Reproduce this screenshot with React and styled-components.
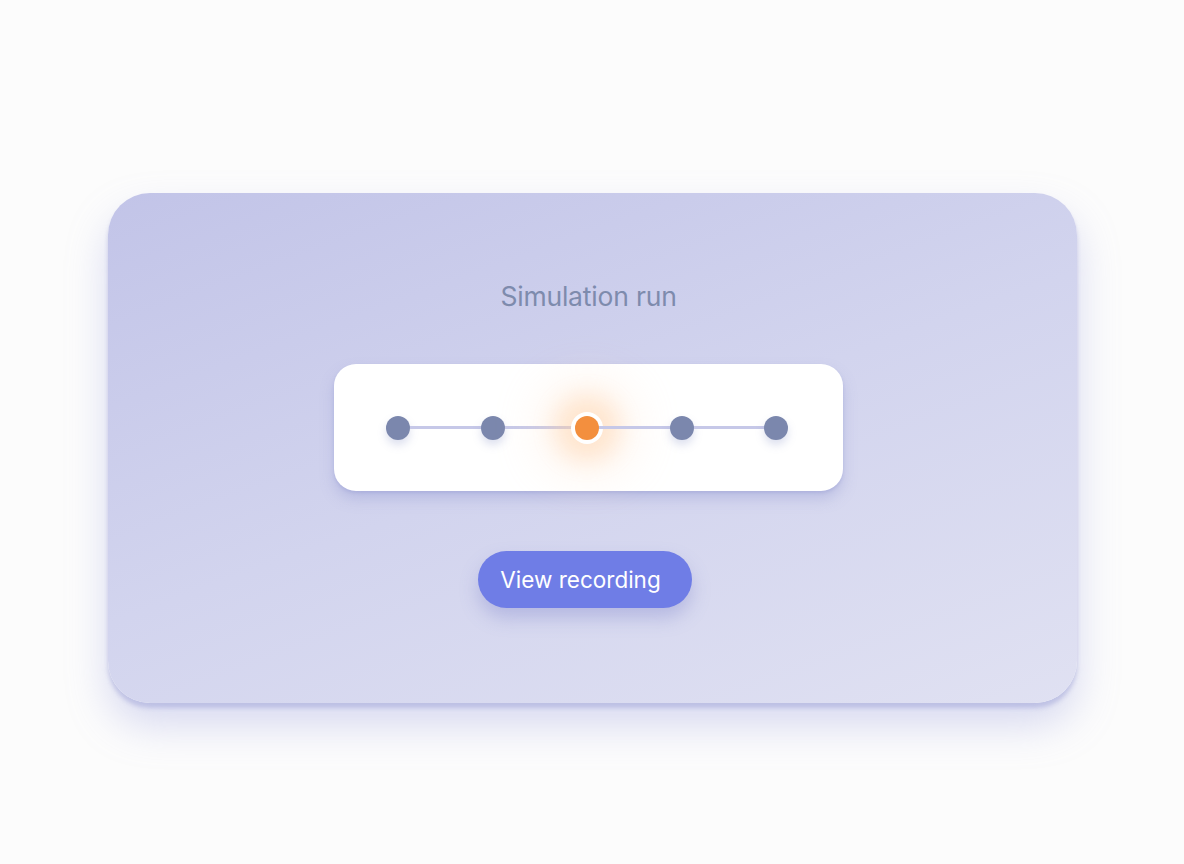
import { Fragment } from "react";
import styled, { createGlobalStyle } from "styled-components";

const GlobalStyle = createGlobalStyle`
    html, body {
        margin: 0;
        padding: 0;
        background: #fcfcfc;
        font-family: Inter, "Noto Sans", sans-serif;
    }
`

const Page = styled.div`
    width: 1184px;
    height: 864px;
    box-sizing: border-box;
    padding: 193px 0 0 108px;
`

const Card = styled.div`
    width: 969px;
    height: 510px;
    box-sizing: border-box;
    border-radius: 42px;
    background: linear-gradient(160deg, #c2c4e8 0%, #d2d4ee 50%, #e0e1f2 100%);
    box-shadow: 0 5px 4px rgba(150, 155, 210, 0.45), 0 22px 40px rgba(150, 155, 220, 0.35);
    display: flex;
    flex-direction: column;
    align-items: center;
    padding: 88px 8px 0 0;
`

const Title = styled.h2`
    margin: 0;
    font-size: 26.5px;
    line-height: 31px;
    font-weight: 400;
    color: #7e8bad;
    letter-spacing: -0.2px;
`

const Track = styled.div`
    margin-top: 52px;
    width: 509px;
    height: 127px;
    box-sizing: border-box;
    background: #fff;
    border-radius: 22px;
    box-shadow: 0 8px 14px rgba(140, 145, 205, 0.35), 0 2px 3px rgba(140, 145, 205, 0.3);
    display: flex;
    align-items: center;
    padding: 0 55px 0 52px;
`

const Dot = styled.div`
    width: 24px;
    height: 24px;
    flex: none;
    border-radius: 50%;
    background: ${p => (p.$active ? "#f38f3e" : "#7b87ad")};
    box-shadow: ${p =>
        p.$active
            ? "0 0 0 4px #fff, 0 0 22px 20px rgba(255, 196, 140, 0.32), 0 0 46px 34px rgba(255, 222, 195, 0.3)"
            : "0 5px 8px rgba(120, 130, 190, 0.25)"};
`

const Line = styled.div`
    flex: 1;
    height: 3px;
    background: #c6c8e8;
`

const ViewButton = styled.button`
    margin-top: 60px;
    margin-right: 8px;
    width: 214px;
    height: 57px;
    border: none;
    border-radius: 29px;
    background: #6f7de6;
    color: #fff;
    font-family: Inter, "Noto Sans", sans-serif;
    font-size: 22.5px;
    font-weight: 400;
    padding: 0 8px 0 0;
    box-shadow: 0 10px 18px rgba(120, 125, 200, 0.35);
    cursor: pointer;
`

const App = () => {
    const steps = [0, 1, 2, 3, 4]
    const current = 2

    return (
        <Page>
            <GlobalStyle />
            <Card>
                <Title>Simulation run</Title>
                <Track>
                    {steps.map((s, i) => (
                        <Fragment key={s}>
                            {i > 0 && <Line />}
                            <Dot $active={s === current} />
                        </Fragment>
                    ))}
                </Track>
                <ViewButton>View recording</ViewButton>
            </Card>
        </Page>
    )
}

export default App;
